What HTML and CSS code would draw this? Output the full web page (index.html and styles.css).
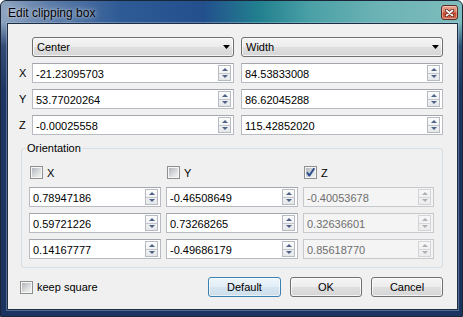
FILE: index.html
```html
<!DOCTYPE html>
<html>
<head>
<meta charset="utf-8">
<title>Edit clipping box</title>
<link rel="stylesheet" href="styles.css">
</head>
<body>
<div class="window">
  <div class="titlebar">
    <span class="title">Edit clipping box</span>
    <div class="close">
      <svg width="9" height="8" viewBox="0 0 9 8"><path d="M1.5 1.5 L7.5 6.5 M7.5 1.5 L1.5 6.5" stroke="#5a2018" stroke-width="3.2" stroke-linecap="round"/><path d="M1.5 1.5 L7.5 6.5 M7.5 1.5 L1.5 6.5" stroke="#fff" stroke-width="1.7" stroke-linecap="round"/></svg>
    </div>
  </div>
  <div class="client">
    <div class="topgrid">
      <span></span>
      <div class="combo"><span>Center</span><svg class="arrow" width="7" height="4" viewBox="0 0 7 4"><polygon points="0,0 7,0 3.5,4" fill="#000"/></svg></div>
      <div class="combo col2"><span>Width</span><svg class="arrow" width="7" height="4" viewBox="0 0 7 4"><polygon points="0,0 7,0 3.5,4" fill="#000"/></svg></div>

      <span class="lab">X</span>
      <div class="spin"><span class="val">-21.23095703</span><span class="btns"><b class="up"></b><b class="dn"></b></span></div>
      <div class="spin col2"><span class="val">84.53833008</span><span class="btns"><b class="up"></b><b class="dn"></b></span></div>

      <span class="lab">Y</span>
      <div class="spin"><span class="val">53.77020264</span><span class="btns"><b class="up"></b><b class="dn"></b></span></div>
      <div class="spin col2"><span class="val">86.62045288</span><span class="btns"><b class="up"></b><b class="dn"></b></span></div>

      <span class="lab">Z</span>
      <div class="spin"><span class="val">-0.00025558</span><span class="btns"><b class="up"></b><b class="dn"></b></span></div>
      <div class="spin col2"><span class="val">115.42852020</span><span class="btns"><b class="up"></b><b class="dn"></b></span></div>
    </div>

    <div class="group">
      <span class="legend">Orientation</span>
      <div class="ogrid">
        <label class="check"><span class="cb"></span>X</label>
        <label class="check"><span class="cb"></span>Y</label>
        <label class="check"><span class="cb checked"><svg width="13" height="13" viewBox="0 0 13 13"><path d="M3 6.2 L5.3 9.6 L10.3 2.2" fill="none" stroke="#2a4d8f" stroke-width="1.9" stroke-linejoin="round"/></svg></span>Z</label>

        <div class="spin"><span class="val">0.78947186</span><span class="btns"><b class="up"></b><b class="dn"></b></span></div>
        <div class="spin"><span class="val">-0.46508649</span><span class="btns"><b class="up"></b><b class="dn"></b></span></div>
        <div class="spin disabled"><span class="val">-0.40053678</span><span class="btns"><b class="up"></b><b class="dn"></b></span></div>

        <div class="spin"><span class="val">0.59721226</span><span class="btns"><b class="up"></b><b class="dn"></b></span></div>
        <div class="spin"><span class="val">0.73268265</span><span class="btns"><b class="up"></b><b class="dn"></b></span></div>
        <div class="spin disabled"><span class="val">0.32636601</span><span class="btns"><b class="up"></b><b class="dn"></b></span></div>

        <div class="spin"><span class="val">0.14167777</span><span class="btns"><b class="up"></b><b class="dn"></b></span></div>
        <div class="spin"><span class="val">-0.49686179</span><span class="btns"><b class="up"></b><b class="dn"></b></span></div>
        <div class="spin disabled"><span class="val">0.85618770</span><span class="btns"><b class="up"></b><b class="dn"></b></span></div>
      </div>
    </div>

    <div class="bottom">
      <label class="check"><span class="cb"></span>keep square</label>
      <div class="buttons">
        <button class="btn default">Default</button>
        <button class="btn">OK</button>
        <button class="btn">Cancel</button>
      </div>
    </div>
  </div>
</div>
</body>
</html>
```
FILE: styles.css
```css
* { box-sizing: border-box; }
html, body { margin: 0; padding: 0; }
body {
  width: 463px;
  height: 317px;
  overflow: hidden;
  font-family: "Liberation Sans", Arial, sans-serif;
  font-size: 11px;
  color: #000;
  background: #fff;
}

.window {
  width: 463px;
  height: 317px;
  border: 1px solid #1a2538;
  border-radius: 6px 6px 0 0;
  display: flex;
  flex-direction: column;
  background:
    linear-gradient(180deg, rgba(29,55,101,0) 0, rgba(29,55,101,0) 21px, rgba(29,55,101,0.8) 45px, #1c3562 90px, #1b335f 100%),
    linear-gradient(90deg, #8ea4c0 0%, #5f7ea9 10%, #2e5a95 26%, #23508d 44%, #22808f 56%, #4aa0a6 67%, #6cb3b5 82%, #7ebcbd 100%);
}

.titlebar {
  flex: none;
  height: 22px;
  display: flex;
  align-items: flex-start;
  padding-left: 7px;
}
.title {
  font-size: 12px;
  line-height: 22px;
  margin-top: 1px;
  color: #000;
  text-shadow: 0 0 6px rgba(255,255,255,0.75), 0 0 2px rgba(255,255,255,0.5);
}
.close {
  margin-left: auto;
  margin-right: 4px;
  margin-top: 4px;
  width: 17px;
  height: 15px;
  border: 1px solid #5e2a22;
  border-radius: 3px;
  background: linear-gradient(#e9a896 0%, #d77a63 45%, #c4462e 55%, #d56e50 100%);
  box-shadow: inset 0 0 0 1px rgba(255,255,255,0.35);
  display: flex;
  align-items: center;
  justify-content: center;
}

.client {
  flex: none;
  height: 287px;
  margin: 0 4px 0 6px;
  border: 1px solid #1f2d42;
  background: #f0f0f0;
  box-shadow: 0 0 0 1px rgba(190,215,240,0.35);
  padding-top: 13px;
}

.topgrid {
  display: grid;
  grid-template-columns: 13px 202px 209px;
  grid-auto-rows: 20px;
  row-gap: 6px;
  margin-left: 11px;
}
.col2 { margin-left: 7px; }
.lab { line-height: 21px; }

.combo {
  display: flex;
  align-items: center;
  justify-content: space-between;
  border: 1px solid #707070;
  border-radius: 3px;
  padding: 0 3px 0 4px;
  background: linear-gradient(#f5f5f5 0%, #ececec 48%, #dfdfdf 52%, #d5d5d5 100%);
  box-shadow: inset 0 0 0 1px rgba(255,255,255,0.7);
}
.combo .arrow { margin-top: -1px; }

.spin {
  display: flex;
  align-items: center;
  background: #fff;
  border: 1px solid #b8bcc2;
  border-top-color: #a3a7ad;
  padding: 0 2px 0 3px;
}
.spin .val {
  flex: 1;
  padding-top: 1px;
  white-space: nowrap;
}
.btns {
  flex: none;
  width: 13px;
  height: 16px;
  border: 1px solid #b6bbc3;
  display: flex;
  flex-direction: column;
  background: linear-gradient(#fcfcfc, #e6e7e9);
}
.btns b {
  flex: 1;
  display: flex;
  align-items: center;
  justify-content: center;
}
.btns b + b { border-top: 1px solid #c2c6cc; }
.btns .up::before {
  content: "";
  border-left: 3px solid transparent;
  border-right: 3px solid transparent;
  border-bottom: 3px solid #4f6388;
}
.btns .dn::before {
  content: "";
  border-left: 3px solid transparent;
  border-right: 3px solid transparent;
  border-top: 3px solid #4f6388;
}

.spin.disabled {
  background: #f4f4f4;
  border-color: #c6c8cb;
  color: #6d6d6d;
}
.spin.disabled .btns {
  border-color: #d2d4d7;
  background: linear-gradient(#f7f7f7, #ececec);
}
.spin.disabled .btns b + b { border-top-color: #d6d8db; }
.spin.disabled .btns .up::before { border-bottom-color: #adb0b5; }
.spin.disabled .btns .dn::before { border-top-color: #adb0b5; }

.group {
  position: relative;
  margin: 13px 14px 0 13px;
  height: 120px;
  border: 1px solid #d5dfe5;
  border-radius: 3px;
  padding: 17px 0 0 7px;
}
.legend {
  position: absolute;
  top: -8px;
  left: 4px;
  padding: 0 1px;
  line-height: 14px;
  background: #f0f0f0;
}
.ogrid {
  display: grid;
  grid-template-columns: 132px 132px 131px;
  grid-template-rows: 15px 20px 20px 20px;
  column-gap: 5px;
  row-gap: 6px;
}

.check {
  display: flex;
  align-items: center;
  gap: 4px;
  height: 13px;
  margin-left: 1px;
  align-self: start;
}
.cb {
  position: relative;
  flex: none;
  width: 13px;
  height: 13px;
  border: 1px solid #8e8f8f;
  padding: 1px;
  background: linear-gradient(135deg, #b2b6bb 0%, #dcdee0 60%, #f2f2f2 100%) content-box, #f6f6f6;
}
.cb svg {
  position: absolute;
  left: -1px;
  top: -1px;
}

.bottom {
  display: flex;
  align-items: center;
  justify-content: space-between;
  height: 20px;
  margin: 9px 14px 0 12px;
}
.bottom .check { margin-left: 0; align-self: center; }
.buttons {
  display: flex;
  gap: 9px;
}
.btn {
  width: 72px;
  height: 20px;
  padding: 0;
  font-family: "Liberation Sans", Arial, sans-serif;
  font-size: 11px;
  color: #000;
  border: 1px solid #707070;
  border-radius: 3px;
  background: linear-gradient(#f5f5f5 0%, #ececec 48%, #dfdfdf 52%, #d5d5d5 100%);
  box-shadow: inset 0 0 0 1px rgba(255,255,255,0.7);
}
.btn.default {
  width: 73px;
  border-color: #3c7fb1;
  background: linear-gradient(#eef6fc 0%, #e2edf6 48%, #d6e5f1 52%, #cddeeb 100%);
  box-shadow: inset 0 0 0 1px rgba(255,255,255,0.6);
}
```
